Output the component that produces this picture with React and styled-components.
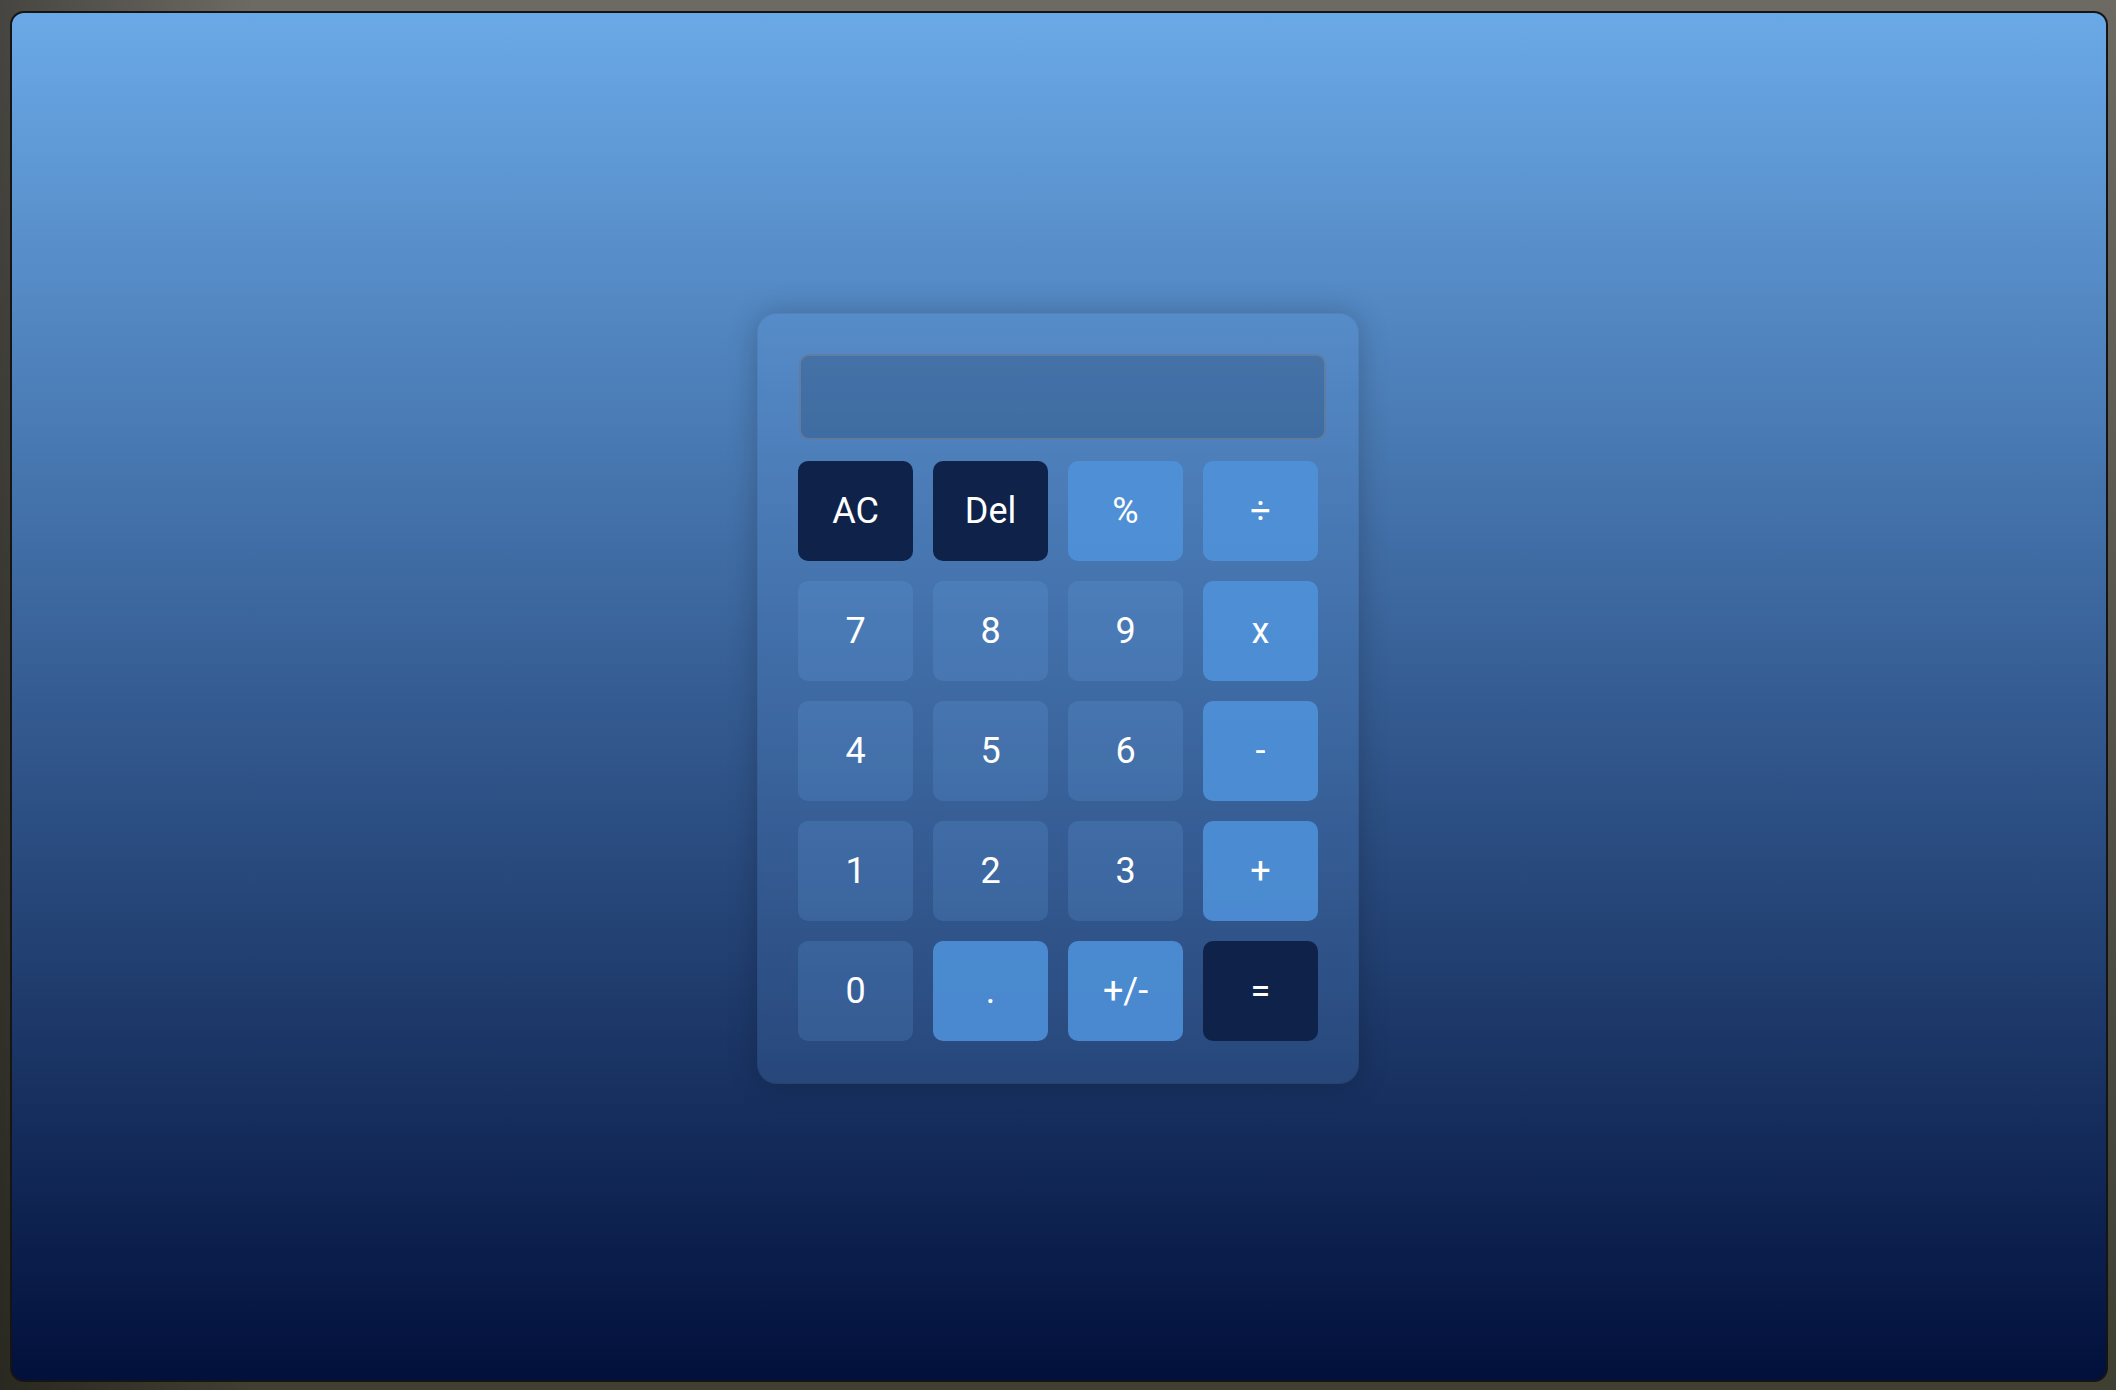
import React from "react";
import styled, { createGlobalStyle } from "styled-components";

const GlobalStyle = createGlobalStyle`
  *, *::before, *::after { box-sizing: border-box; }
  html, body, #root { height: 100%; }
  body {
    margin: 0;
    font-family: Roboto, "Liberation Sans", Arial, sans-serif;
    background:
      linear-gradient(to right, rgba(0,0,0,0.35) 0%, rgba(0,0,0,0) 12%, rgba(0,0,0,0) 100%),
      linear-gradient(to bottom, #6d6a63 0%, #55534a 50%, #3f3f32 100%);
  }
`;

const Screen = styled.div`
  min-height: 100vh;
  padding: 11px 8px 8px 10px;
  display: flex;
`;

const Window = styled.main`
  flex: 1;
  border: 2px solid #151515;
  border-radius: 14px;
  background: linear-gradient(to bottom, #6aa9e7 0%, #3a649b 45%, #02103b 100%);
  display: flex;
  align-items: center;
  justify-content: center;
  overflow: hidden;
`;

const Calculator = styled.section`
  width: 602px;
  margin: 4px 2px 0 0;
  padding: 40px 40px 42px 40px;
  border-radius: 20px;
  border: 1px solid rgba(0, 0, 0, 0.05);
  background: rgba(100, 160, 230, 0.2);
  box-shadow: 0 0 30px rgba(0, 0, 0, 0.22);
`;

const Display = styled.div`
  width: 527px;
  height: 86px;
  margin: 0 0 21px 1px;
  border-radius: 10px;
  border: 2px solid rgba(130, 140, 160, 0.45);
  background: rgba(0, 15, 40, 0.18);
  color: #fff;
  font-size: 40px;
  display: flex;
  align-items: center;
  justify-content: flex-end;
  padding: 0 20px;
`;

const Keypad = styled.div`
  display: grid;
  grid-template-columns: repeat(4, 115px);
  grid-auto-rows: 100px;
  gap: 20px;
`;

const variants = {
  num: "rgba(110, 170, 240, 0.18)",
  op: "rgba(79, 146, 218, 0.88)",
  dark: "#0f2249",
};

const Key = styled.button`
  border: none;
  border-radius: 10px;
  padding: 0;
  margin: 0;
  background: ${(p) => variants[p.$variant]};
  color: #ffffff;
  font-family: Roboto, "Liberation Sans", Arial, sans-serif;
  font-size: 36px;
  font-weight: 400;
  display: flex;
  align-items: center;
  justify-content: center;
  cursor: pointer;
`;

const keys = [
  ["AC", "dark"], ["Del", "dark"], ["%", "op"], ["÷", "op"],
  ["7", "num"], ["8", "num"], ["9", "num"], ["x", "op"],
  ["4", "num"], ["5", "num"], ["6", "num"], ["-", "op"],
  ["1", "num"], ["2", "num"], ["3", "num"], ["+", "op"],
  ["0", "num"], [".", "op"], ["+/-", "op"], ["=", "dark"],
];

export default function App() {
  return (
    <>
      <GlobalStyle />
      <Screen>
        <Window>
          <Calculator>
            <Display />
            <Keypad>
              {keys.map(([label, v]) => (
                <Key key={label} $variant={v}>
                  {label}
                </Key>
              ))}
            </Keypad>
          </Calculator>
        </Window>
      </Screen>
    </>
  );
}
